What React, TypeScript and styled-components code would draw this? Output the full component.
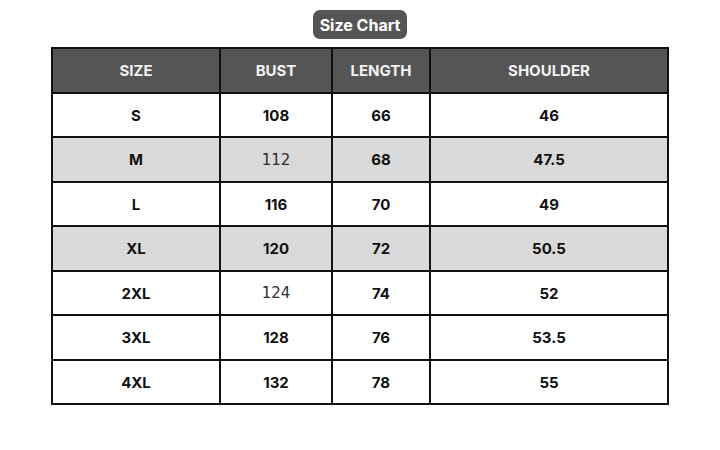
import React from "react";
import styled, { createGlobalStyle } from "styled-components";

const Global = createGlobalStyle`
  html, body { margin: 0; padding: 0; background: #ffffff; }
  body { font-family: Inter, "Open Sans", Arial, sans-serif; }
`;

const Page = styled.div`
  width: 720px;
  height: 450px;
  display: flex;
  flex-direction: column;
  align-items: center;
  padding-top: 10px;
  box-sizing: border-box;
`;

const Title = styled.div`
  width: 94px;
  height: 29px;
  border-radius: 7px;
  background: #555555;
  color: #ffffff;
  font-family: Inter, sans-serif;
  font-weight: 700;
  font-size: 16px;
  display: flex;
  align-items: center;
  justify-content: center;
  margin-bottom: 8px;
`;

const Grid = styled.div`
  display: grid;
  grid-template-columns: 166px 110px 96px 236px;
  grid-template-rows: repeat(8, 42.5px);
  gap: 2px;
  padding: 2px;
  background: #111111;
`;

const Cell = styled.div<{ $bg: string; $color: string; $light?: boolean }>`
  background: ${(p) => p.$bg};
  color: ${(p) => (p.$light ? "#2e2e2e" : p.$color)};
  display: flex;
  align-items: center;
  justify-content: center;
  font-family: ${(p) => (p.$light ? '"DejaVu Sans", sans-serif' : "Inter, sans-serif")};
  font-weight: ${(p) => (p.$light ? 400 : 700)};
  font-size: 15px;
  padding-top: 1px;
  box-sizing: border-box;
`;

const header = ["SIZE", "BUST", "LENGTH", "SHOULDER"];
const rows: string[][] = [
  ["S", "108", "66", "46"],
  ["M", "112", "68", "47.5"],
  ["L", "116", "70", "49"],
  ["XL", "120", "72", "50.5"],
  ["2XL", "124", "74", "52"],
  ["3XL", "128", "76", "53.5"],
  ["4XL", "132", "78", "55"],
];
const lightCells = new Set(["1-1", "4-1"]);
const grayRows = new Set([1, 3]);

export default function App() {
  return (
    <>
      <Global />
      <Page>
        <Title>Size Chart</Title>
        <Grid>
          {header.map((h) => (
            <Cell key={h} $bg="#555555" $color="#f2f2f2">
              {h}
            </Cell>
          ))}
          {rows.map((r, i) =>
            r.map((v, j) => (
              <Cell
                key={`${i}-${j}`}
                $bg={grayRows.has(i) ? "#d9d9d9" : "#ffffff"}
                $color="#111111"
                $light={lightCells.has(`${i}-${j}`)}
              >
                {v}
              </Cell>
            ))
          )}
        </Grid>
      </Page>
    </>
  );
}
